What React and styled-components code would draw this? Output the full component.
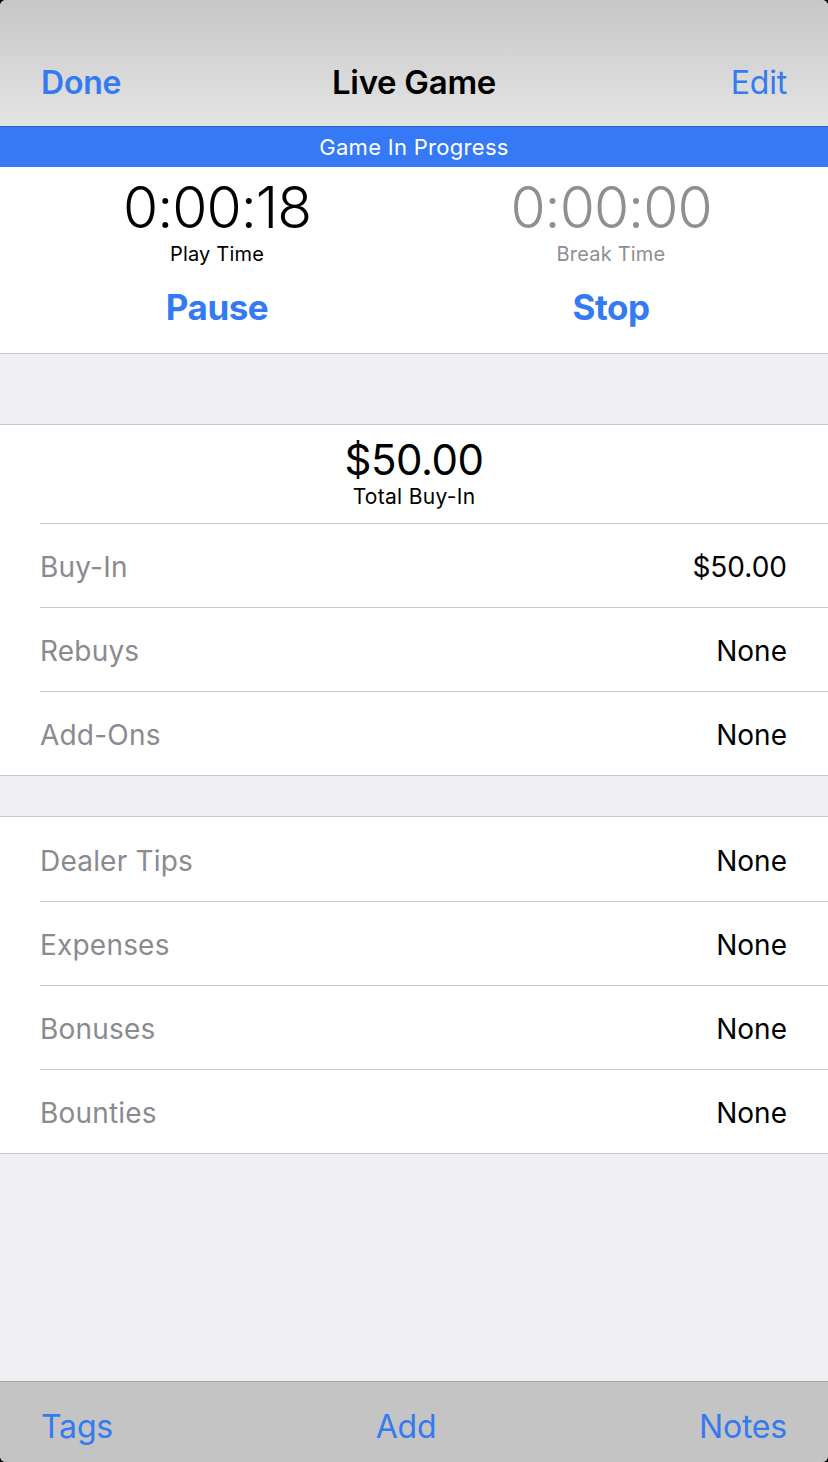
import React from "react";
import styled, { createGlobalStyle } from "styled-components";

const GlobalStyle = createGlobalStyle`
  html, body {
    margin: 0;
    padding: 0;
    background: #000;
  }
  body {
    font-family: "Inter", "Liberation Sans", sans-serif;
    -webkit-font-smoothing: antialiased;
  }
`;

const blue = "#347af2";
const hairline = "#c8c7cc";

const Screen = styled.div`
  height: 1462px;
  display: flex;
  flex-direction: column;
  background: #efeff4;
  border-radius: 6px;
  overflow: hidden;
`;

const NavBar = styled.div`
  height: 126px;
  box-sizing: border-box;
  padding: 38px 41px 0;
  display: grid;
  grid-template-columns: 1fr auto 1fr;
  align-items: center;
  background: linear-gradient(#c7c7c7, #e4e4e4);
`;

const NavButton = styled.button`
  border: none;
  background: transparent;
  padding: 0;
  font-family: inherit;
  font-size: 32px;
  font-weight: ${(p) => (p.$bold ? 600 : 400)};
  color: ${blue};
  justify-self: ${(p) => (p.$right ? "end" : "start")};
  letter-spacing: -0.2px;
`;

const NavTitle = styled.h1`
  margin: 0;
  font-size: 33px;
  font-weight: 600;
  color: #000;
  letter-spacing: -0.3px;
`;

const Banner = styled.div`
  height: 40px;
  border-top: 1px solid #2f62c4;
  background: #3579f6;
  color: #fff;
  font-size: 22px;
  letter-spacing: 0.3px;
  display: flex;
  align-items: center;
  justify-content: center;
`;

const TimerSection = styled.div`
  height: 187px;
  box-sizing: border-box;
  padding: 9px 20px 0;
  display: grid;
  grid-template-columns: 1fr 1fr;
  background: #fff;
  border-bottom: 1px solid ${hairline};
`;

const TimerColumn = styled.div`
  display: flex;
  flex-direction: column;
  align-items: center;
`;

const Clock = styled.div`
  font-size: 57px;
  font-weight: 300;
  line-height: 64px;
  letter-spacing: -1px;
  color: ${(p) => (p.$dim ? "#8e8e93" : "#000")};
`;

const ClockLabel = styled.div`
  font-size: 20px;
  line-height: 26px;
  margin-top: 1px;
  letter-spacing: 0.2px;
  color: ${(p) => (p.$dim ? "#8e8e93" : "#000")};
`;

const ActionButton = styled.button`
  margin-top: 19px;
  border: none;
  background: transparent;
  padding: 0;
  font-family: inherit;
  font-size: 35px;
  font-weight: 700;
  color: ${blue};
  letter-spacing: -0.5px;
`;

const Gap = styled.div`
  height: ${(p) => p.$h}px;
  flex-shrink: 0;
`;

const Group = styled.div`
  background: #fff;
  border-top: 1px solid ${hairline};
  border-bottom: 1px solid ${hairline};
`;

const Total = styled.div`
  height: 98px;
  display: flex;
  flex-direction: column;
  align-items: center;
  padding-top: 11px;
  box-sizing: border-box;
`;

const TotalAmount = styled.div`
  font-size: 42px;
  line-height: 48px;
  font-weight: 400;
  letter-spacing: -0.5px;
`;

const TotalLabel = styled.div`
  font-size: 21px;
  line-height: 26px;
  letter-spacing: 0.3px;
`;

const Row = styled.div`
  height: 84px;
  margin-left: 40px;
  padding: 3px 41px 0 0;
  display: flex;
  align-items: center;
  justify-content: space-between;
  box-sizing: border-box;
  border-top: ${(p) => (p.$first ? "none" : `1px solid ${hairline}`)};
  font-size: 28px;
`;

const RowLabel = styled.span`
  color: #8a8a8f;
  letter-spacing: 0.2px;
`;

const RowValue = styled.span`
  color: #000;
`;

const Spacer = styled.div`
  flex: 1;
`;

const Toolbar = styled.div`
  height: 81px;
  box-sizing: border-box;
  border-top: 1px solid #a4a4a4;
  background: #c4c4c4;
  padding: 8px 41px 0;
  display: flex;
  align-items: center;
  justify-content: space-between;
`;

const ToolButton = styled.button`
  border: none;
  background: transparent;
  padding: 0;
  font-family: inherit;
  font-size: 32px;
  color: ${blue};
  letter-spacing: -0.2px;
`;

const buyRows = [
  ["Buy-In", "$50.00"],
  ["Rebuys", "None"],
  ["Add-Ons", "None"],
];

const extraRows = [
  ["Dealer Tips", "None"],
  ["Expenses", "None"],
  ["Bonuses", "None"],
  ["Bounties", "None"],
];

export default function App() {
  return (
    <>
      <GlobalStyle />
      <Screen>
        <NavBar>
          <NavButton $bold>Done</NavButton>
          <NavTitle>Live Game</NavTitle>
          <NavButton $right>Edit</NavButton>
        </NavBar>
        <Banner>Game In Progress</Banner>

        <TimerSection>
          <TimerColumn>
            <Clock>0:00:18</Clock>
            <ClockLabel>Play Time</ClockLabel>
            <ActionButton>Pause</ActionButton>
          </TimerColumn>
          <TimerColumn>
            <Clock $dim>0:00:00</Clock>
            <ClockLabel $dim>Break Time</ClockLabel>
            <ActionButton>Stop</ActionButton>
          </TimerColumn>
        </TimerSection>

        <Gap $h={70} />

        <Group>
          <Total>
            <TotalAmount>$50.00</TotalAmount>
            <TotalLabel>Total Buy-In</TotalLabel>
          </Total>
          {buyRows.map(([label, value]) => (
            <Row key={label}>
              <RowLabel>{label}</RowLabel>
              <RowValue>{value}</RowValue>
            </Row>
          ))}
        </Group>

        <Gap $h={40} />

        <Group>
          {extraRows.map(([label, value], i) => (
            <Row key={label} $first={i === 0}>
              <RowLabel>{label}</RowLabel>
              <RowValue>{value}</RowValue>
            </Row>
          ))}
        </Group>

        <Spacer />

        <Toolbar>
          <ToolButton>Tags</ToolButton>
          <ToolButton>Add</ToolButton>
          <ToolButton>Notes</ToolButton>
        </Toolbar>
      </Screen>
    </>
  );
}
